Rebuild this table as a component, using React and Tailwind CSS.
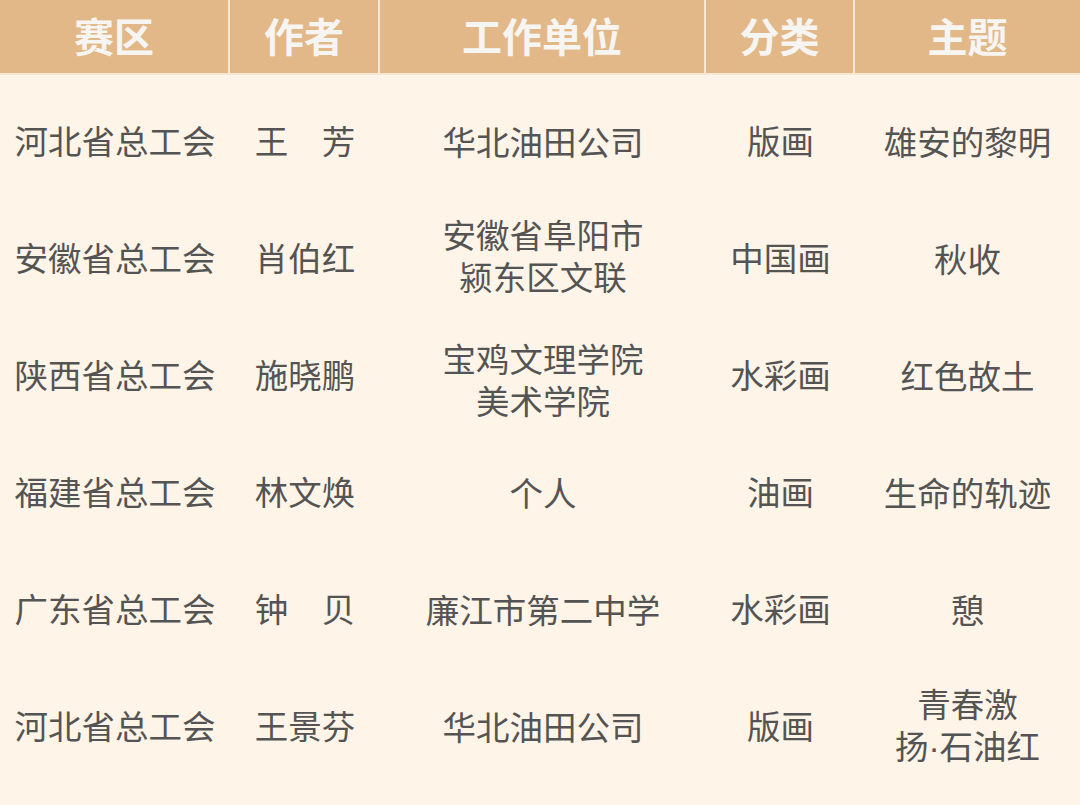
import React from "react";

const Dot = () => (
  <span style={{ fontFamily: '"Liberation Sans", sans-serif' }}>·</span>
);

const rows = [
  ["河北省总工会", "王　芳", ["华北油田公司"], "版画", ["雄安的黎明"], "", ""],
  ["安徽省总工会", "肖伯红", ["安徽省阜阳市", "颍东区文联"], "中国画", ["秋收"], "mb-[6px]", ""],
  ["陕西省总工会", "施晓鹏", ["宝鸡文理学院", "美术学院"], "水彩画", ["红色故土"], "mt-[8px]", ""],
  ["福建省总工会", "林文焕", ["个人"], "油画", ["生命的轨迹"], "", ""],
  ["广东省总工会", "钟　贝", ["廉江市第二中学"], "水彩画", ["憩"], "", ""],
  [
    "河北省总工会",
    "王景芬",
    ["华北油田公司"],
    "版画",
    [
      "青春激",
      <>
        扬<Dot />石油红
      </>,
    ],
    "",
    "",
  ],
];

const headers = ["赛区", "作者", "工作单位", "分类", "主题"];
const cols = "grid grid-cols-[230px_150px_326px_149px_225px]";

function Lines({ items, extra }) {
  return (
    <div className={`flex flex-col items-center leading-[42px] ${extra}`}>
      {items.map((t, i) => (
        <span key={i}>{t}</span>
      ))}
    </div>
  );
}

export default function App() {
  return (
    <div
      className="w-[1080px] h-[805px] bg-[#fef5e8] overflow-hidden"
      style={{ fontFamily: '"Noto Sans CJK SC", "Noto Sans", sans-serif' }}
    >
      <div className={`${cols} h-[75px] bg-[#e3b889] border-b-2 border-[#f7e8d4]`}>
        {headers.map((h, i) => (
          <div
            key={h}
            className={`flex items-center justify-center pb-[3px] text-[40px] font-bold text-[#f7f5f2] ${
              i < headers.length - 1 ? "border-r-2 border-[#f7e8d4]" : ""
            }`}
          >
            {h}
          </div>
        ))}
      </div>
      <div className="pt-[7px]">
        {rows.map((r, i) => (
          <div key={i} className={`${cols} h-[117px] text-[33.5px] text-[#545454]`}>
            <div className="flex items-center justify-center">{r[0]}</div>
            <div className="flex items-center justify-center">{r[1]}</div>
            <div className="flex items-center justify-center">
              <Lines items={r[2]} extra={r[5]} />
            </div>
            <div className="flex items-center justify-center">{r[3]}</div>
            <div className="flex items-center justify-center">
              <Lines items={r[4]} extra={r[6]} />
            </div>
          </div>
        ))}
      </div>
    </div>
  );
}
